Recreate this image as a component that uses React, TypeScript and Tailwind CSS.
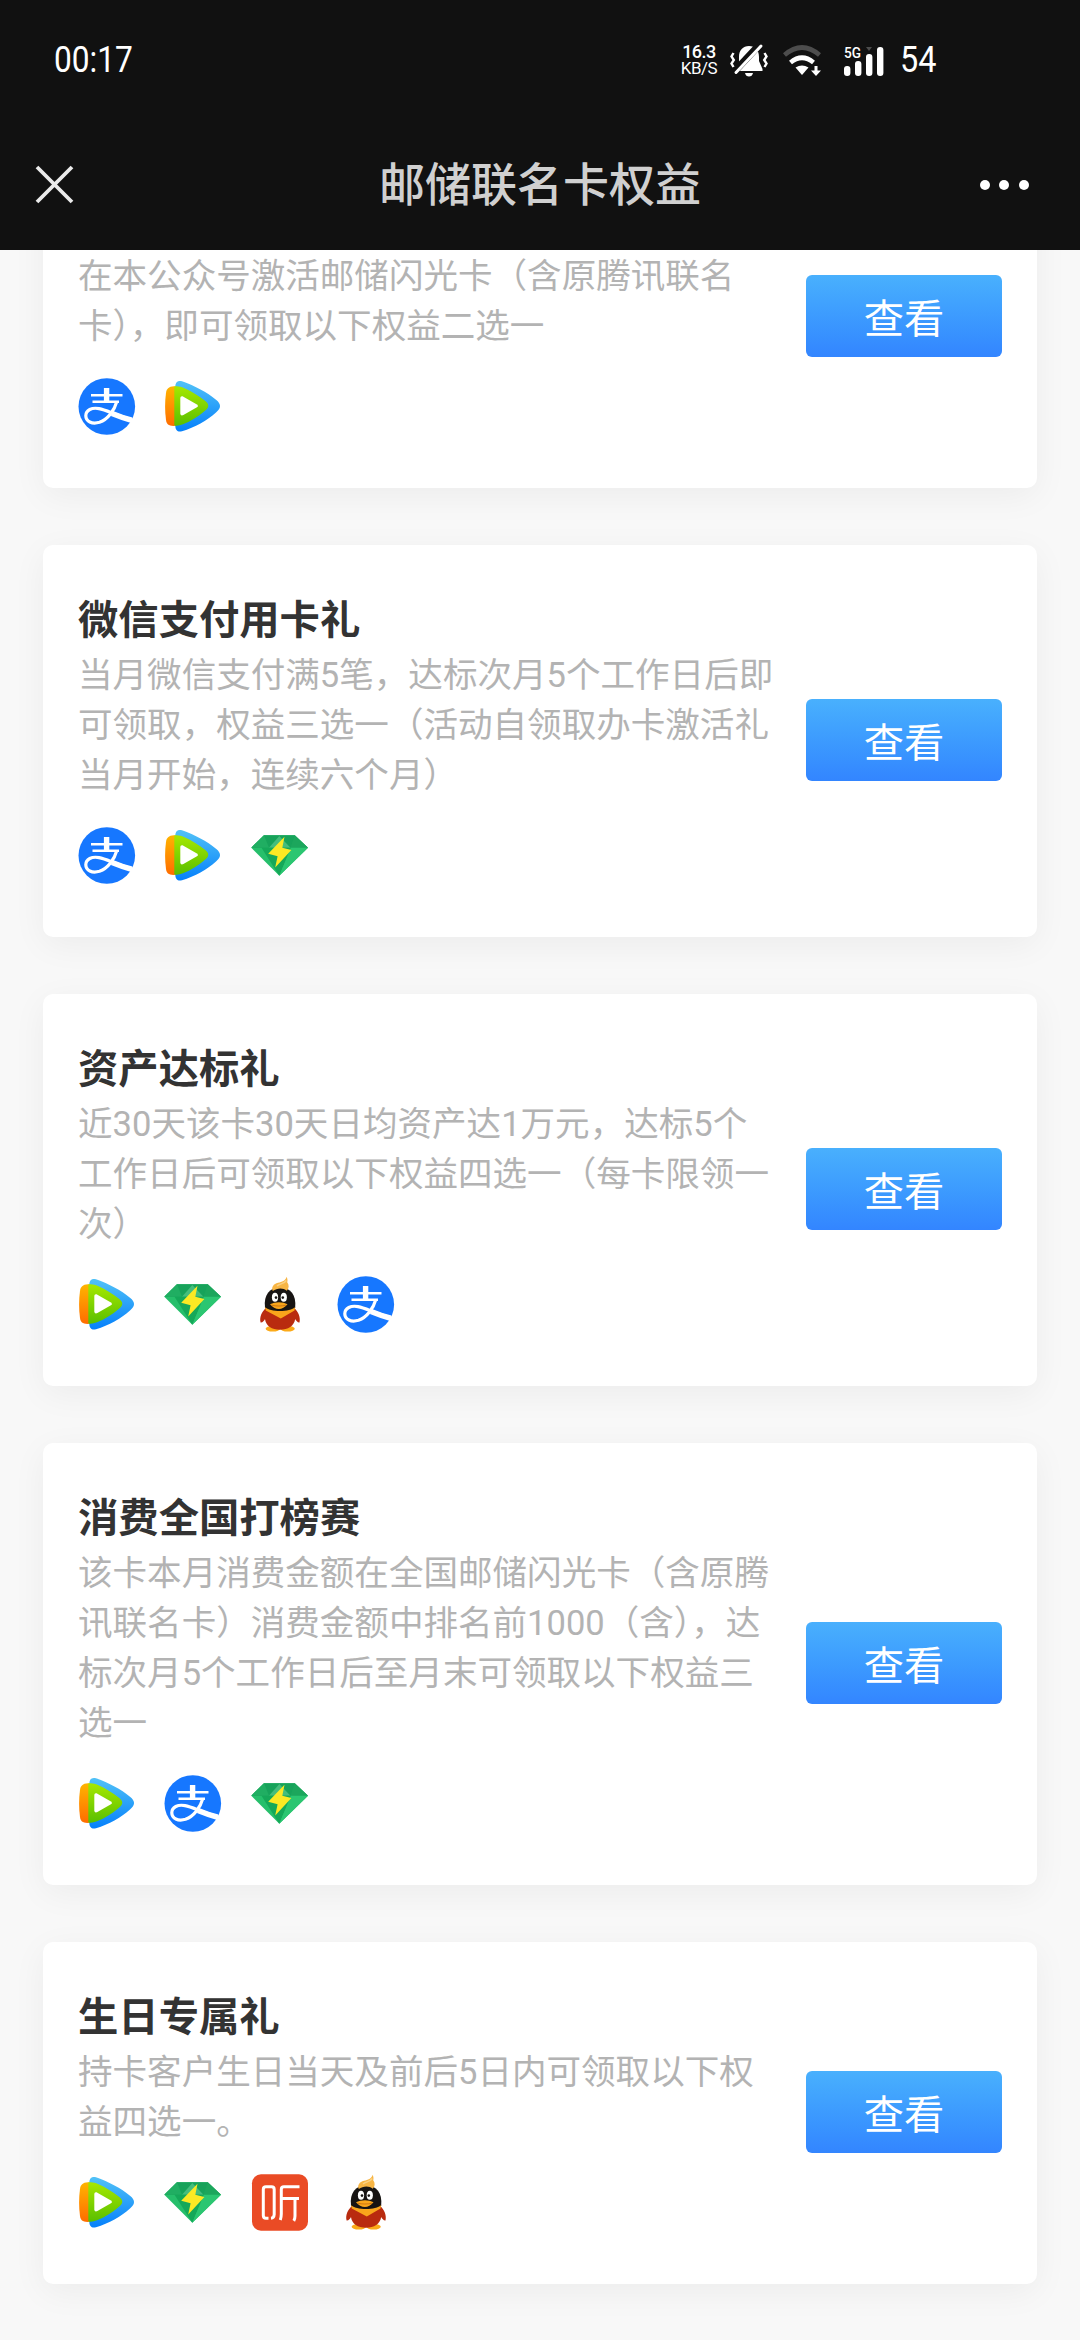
import type { ReactNode } from 'react';

type Brand = 'alipay' | 'video' | 'music' | 'qq' | 'ting';

interface Benefit {
  title: string;
  desc: string;
  brands: Brand[];
}

const benefits: Benefit[] = [
  {
    title: '激活有礼',
    desc: '在本公众号激活邮储闪光卡（含原腾讯联名\n卡），即可领取以下权益二选一',
    brands: ['alipay', 'video'],
  },
  {
    title: '微信支付用卡礼',
    desc: '当月微信支付满5笔，达标次月5个工作日后即\n可领取，权益三选一（活动自领取办卡激活礼\n当月开始，连续六个月）',
    brands: ['alipay', 'video', 'music'],
  },
  {
    title: '资产达标礼',
    desc: '近30天该卡30天日均资产达1万元，达标5个\n工作日后可领取以下权益四选一（每卡限领一\n次）',
    brands: ['video', 'music', 'qq', 'alipay'],
  },
  {
    title: '消费全国打榜赛',
    desc: '该卡本月消费金额在全国邮储闪光卡（含原腾\n讯联名卡）消费金额中排名前1000（含），达\n标次月5个工作日后至月末可领取以下权益三\n选一',
    brands: ['video', 'alipay', 'music'],
  },
  {
    title: '生日专属礼',
    desc: '持卡客户生日当天及前后5日内可领取以下权\n益四选一。',
    brands: ['video', 'music', 'ting', 'qq'],
  },
];

function AlipayIcon() {
  return (
    <>
      <circle cx="28.8" cy="28.5" r="28.3" fill="#1677ff" />
      <g fill="none" stroke="#fff">
        <path d="M13 17.3H44.5M14.5 23.8H41" strokeWidth="2.4" />
        <path d="M28.6 10V23.5" strokeWidth="5.4" />
        <path d="M38.8 23.6C36.5 32 30 41.5 21.5 44.3C14 46.5 7.8 43.5 7.8 37.8C7.8 32 14 29.3 21 30.6C29 32.2 35 36 54.5 42" strokeWidth="3.2" />
        <path d="M34 35.5C40 38 46 40.2 53.8 42.3" strokeWidth="5.6" />
      </g>
    </>
  );
}

function VideoIcon() {
  return (
    <>
      <defs>
        <linearGradient id="video-blue" x1="0" y1="0" x2="0" y2="1">
          <stop offset="0" stopColor="#52c2f7" />
          <stop offset="1" stopColor="#0580fb" />
        </linearGradient>
        <linearGradient id="video-orange" x1="0" y1="0" x2="0" y2="1">
          <stop offset="0" stopColor="#ffb400" />
          <stop offset="1" stopColor="#ff6c00" />
        </linearGradient>
        <linearGradient id="video-green" x1="0" y1="0" x2="0" y2="1">
          <stop offset="0" stopColor="#a6e800" />
          <stop offset="1" stopColor="#5abf00" />
        </linearGradient>
      </defs>
      <path d="M11.3 9C11.3 4 14 2 18 3.3C31 7.8 43 14.5 52 21.7C57.4 26 57.4 30 52 34.4C43 42.3 31 49.3 18 53.3C14 54.4 11.3 52.5 11.3 47.5Z" fill="url(#video-blue)" />
      <path d="M12 8.4C5 7.6 2.6 10.8 2 15C.8 24 .8 33 2 42C2.6 46.4 5 48.6 12 47.8Z" fill="url(#video-orange)" />
      <path d="M10.3 8.4C14 7.8 17 8.6 20 10C28 13.5 35 18 41 22.8C45.4 26.4 45.4 29.2 41 32.8C34 38.7 27 43.3 19 46.3C16 47.5 13 48 10.3 47.5Z" fill="url(#video-green)" />
      <path d="M16.3 20.5C16.3 18.4 17.6 17.8 19.4 18.7L32.5 26.2C34.5 27.5 34.5 28.3 32.5 29.5L19.4 37C17.6 38 16.3 37.3 16.3 35.3Z" fill="#fff" />
    </>
  );
}

function MusicIcon() {
  return (
    <>
      <path d="M13 8.3H43.7L57 20.7L28.3 48.7L.3 20.7Z" fill="#26bf6b" />
      <path d="M13 8.3H43.7L57 20.7H.3Z" fill="#17a25a" />
      <path d="M13 8.3L18 20.7H.3Z" fill="#20ae62" />
      <path d="M43.7 8.3L39.5 20.7H57Z" fill="#1ca65c" />
      <path d="M18 20.7L28.3 9L39.5 20.7Z" fill="#45bd7c" />
      <path d="M10.5 20.7H40L28.3 48.7Z" fill="#15a859" />
      <path d="M40 20.7H57L28.3 48.7Z" fill="#2bc671" />
      <path d="M33.5 9.8L17.2 26.8L26.6 29.2L24.2 40.5L40.4 23L31.3 20.8Z" fill="#fbe924" />
    </>
  );
}

function QQIcon() {
  return (
    <>
      <ellipse cx="21.8" cy="52.7" rx="7.2" ry="2.9" fill="#fbaa19" />
      <ellipse cx="36.6" cy="52.7" rx="7.2" ry="2.9" fill="#fbaa19" />
      <path d="M15 32C10.5 36 8.3 41.5 9.6 46.5C11.5 46.8 13.3 44.5 14 43C14.8 50 21 53.7 29 53.7S43.2 50 44.2 43C45 44.5 46.8 46.8 48.5 46.5C49.7 41.5 47.5 36 43.2 32Z" fill="#b92b0f" />
      <path d="M14 31.5C12.5 19 18.5 11.5 29 11.5S45.5 19 44.2 31.5C40 37 18.5 37 14 31.5Z" fill="#171413" />
      <path d="M14 31C19 36.5 39 36.5 44.2 31L43.5 34.5L29.8 42.5L14.8 34.5Z" fill="#f9a51b" />
      <ellipse cx="24" cy="21.3" rx="3.1" ry="4.5" fill="#fff" />
      <ellipse cx="32.8" cy="21.3" rx="3.1" ry="4.5" fill="#fff" />
      <circle cx="25" cy="21.6" r="1.3" fill="#171413" />
      <circle cx="31.8" cy="21.6" r="1.3" fill="#171413" />
      <path d="M19 28.3C24 25.6 32 25.6 36.5 28.3C34 31.5 31 33 27.8 33S21.5 31.5 19 28.3Z" fill="#f9a51b" />
      <path d="M20.5 29.2C25 30.3 31 30.3 35 29.2" fill="none" stroke="#c26a10" strokeWidth=".8" />
      <path d="M21.8 15C20 11.5 22.5 7.8 27 6.8C31 6 34.5 5 35.6 .8C36.8 3.3 36.6 5 36.2 6.2C38.2 8.8 38.2 12 35.8 14.8C32 11.5 26 12 21.8 15Z" fill="#f7b544" />
      <path d="M26 10C29 7.5 33 8 35.3 4.5" fill="none" stroke="#fbd184" strokeWidth="1.5" />
    </>
  );
}

function TingIcon() {
  return (
    <>
      <rect x="1" y=".3" width="56" height="56.4" rx="9" fill="#ea4b25" />
      <g fill="none" stroke="#fff" strokeWidth="3">
        <path d="M17.5 44.2H15Q12.3 44.2 12.3 41.5V15.5Q12.3 12.8 15 12.8H20.5Q23.2 12.8 23.2 15.5V40.5Q23 44 20 44.3" />
        <path d="M48.5 12.8H33Q30.3 12.8 30.3 15.5V40Q30.3 43 29.3 46M30.3 24.5H48M44 24.5V42Q44 45 42.8 46.8" />
      </g>
    </>
  );
}

const brandIcons: Record<Brand, ReactNode> = {
  alipay: <AlipayIcon />,
  video: <VideoIcon />,
  music: <MusicIcon />,
  qq: <QQIcon />,
  ting: <TingIcon />,
};

function StatusBar() {
  return (
    <div className="flex h-[120px] items-center justify-between pl-[54px] pr-[144px] text-white">
      <span className="origin-left scale-x-[0.88] text-[36px] leading-none">00:17</span>
      <div className="flex items-center">
        <div className="flex w-[38px] flex-col items-center text-[18px]">
          <span className="h-[17px] text-[18px] font-medium leading-[17px] tracking-[-0.5px]">16.3</span>
          <span className="h-[17px] text-[17px] leading-[17px] tracking-[-0.5px]">KB/S</span>
        </div>
        <svg className="ml-[11px] h-[34px] w-[40px]" viewBox="0 0 40 34">
          <path d="M10 24V14C10 7 14 3 20 3S30 7 30 14V18L33.5 26V28H7.5V26Z" fill="#fff" />
          <path d="M16 30H24C23.5 32.5 22 33.5 20 33.5S16.5 32.5 16 30Z" fill="#fff" />
          <path d="M5 29L31 1" stroke="#111" strokeWidth="7" />
          <path d="M7 29.5L32 3" stroke="#fff" strokeWidth="3" strokeLinecap="round" />
          <path d="M4.5 10L2.5 13.5L4.8 17L2.5 20.5L4.5 24M35.5 10L37.5 13.5L35.2 17L37.5 20.5L35.5 24" fill="none" stroke="#fff" strokeWidth="2.4" />
        </svg>
        <svg className="ml-[13px] h-[34px] w-[40px]" viewBox="0 0 40 34">
          <g fill="none" strokeWidth="4.6">
            <path d="M2.5 12Q20 -3 37.5 12" stroke="#4d4d4d" />
            <path d="M8.5 19.5Q20 10 31.5 19.5" stroke="#fff" />
          </g>
          <path d="M13.5 24.5Q20 20.5 26.5 24.5L20 32Z" fill="#fff" />
          <path d="M32.5 23H35.5V27.5H39L34 33L29 27.5H32.5Z" fill="#fff" />
        </svg>
        <svg className="ml-[22px] h-[34px] w-[42px]" viewBox="0 0 42 34">
          <text x="0" y="14.5" fill="#fff" fontSize="15" fontWeight="500" textLength="17" lengthAdjust="spacingAndGlyphs">5G</text>
          <path d="M22 4H28L25 8Z" fill="#4d4d4d" />
          <g fill="#fff">
            <rect x="0" y="23" width="6.4" height="10" rx="3" />
            <rect x="11" y="18" width="6.4" height="15" rx="3" />
            <rect x="22" y="11" width="6.4" height="22" rx="3" />
            <rect x="33" y="4" width="6.4" height="29" rx="3" />
          </g>
        </svg>
        <span className="ml-[14px] w-[36px] origin-left scale-x-[0.9] text-[36px] leading-none">54</span>
      </div>
    </div>
  );
}

function TitleBar() {
  return (
    <div className="grid h-[130px] grid-cols-[1fr_auto_1fr] items-center">
      <svg className="ml-[34px] h-[42px] w-[42px]" viewBox="0 0 42 42">
        <path d="M3 3L38 38M38 3L3 38" stroke="#ebebeb" strokeWidth="3.8" />
      </svg>
      <h1 className="text-[46px] font-medium leading-none text-[#d0d0d0]">邮储联名卡权益</h1>
      <div className="flex justify-end gap-[9.6px] pr-[51px]">
        <i className="size-[10px] rounded-full bg-white" />
        <i className="size-[10px] rounded-full bg-white" />
        <i className="size-[10px] rounded-full bg-white" />
      </div>
    </div>
  );
}

function BenefitCard({ title, desc, brands }: Benefit) {
  return (
    <section className="flex items-center justify-between rounded-[10px] bg-white pb-[52px] pl-[35px] pr-[35px] pt-[47px] shadow-[0_8px_34px_rgba(0,0,0,0.05)]">
      <div>
        <h2 className="h-[58px] text-[40.32px] font-bold leading-[58px] text-[#333]">{title}</h2>
        <p className="whitespace-pre text-[34.56px] leading-[50px] text-[#b3b3b3]">{desc}</p>
        <div className="mt-[27px] flex gap-[28.8px]">
          {brands.map((brand) => (
            <svg key={brand} className="h-[57.6px] w-[57.6px]" viewBox="0 0 57.6 57.6">
              {brandIcons[brand]}
            </svg>
          ))}
        </div>
      </div>
      <button className="-ml-10 mt-1 h-[82px] w-[196px] shrink-0 rounded-[6px] bg-linear-to-b from-[#49b0fd] to-[#3385ff] pt-[7px] text-[40.32px] leading-none text-white">
        查看
      </button>
    </section>
  );
}

export default function App() {
  return (
    <div className="flex h-[2340px] w-[1080px] flex-col overflow-hidden bg-[#f8f8f8] font-[Roboto,'Noto_Sans_CJK_SC',sans-serif]">
      <header className="z-10 h-[250px] shrink-0 bg-[#111]">
        <StatusBar />
        <TitleBar />
      </header>
      {/* list is scrolled: the first card's heading sits under the header */}
      <main className="-mt-[104px] flex flex-col gap-[57.4px] px-[43px]">
        {benefits.map((item) => (
          <BenefitCard key={item.title} {...item} />
        ))}
      </main>
    </div>
  );
}
